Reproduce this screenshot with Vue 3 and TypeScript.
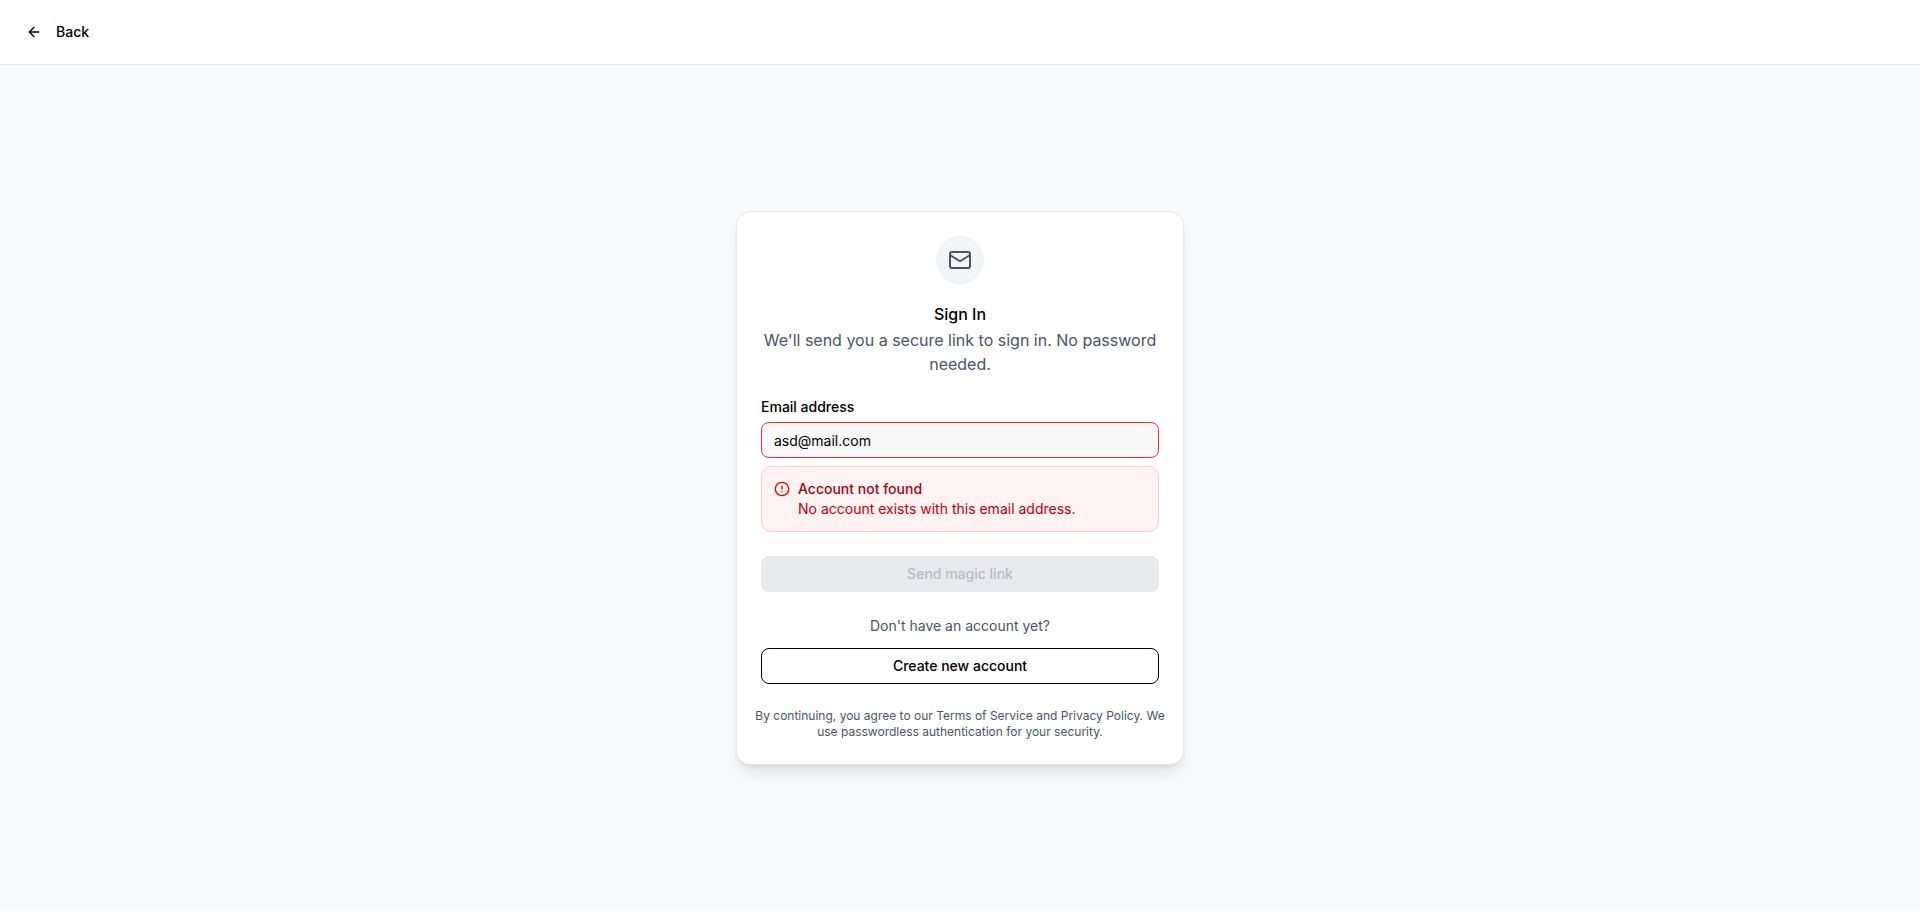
<script setup lang="ts">
import { ref } from 'vue'

const email = ref('asd@mail.com')
const error = ref({
  title: 'Account not found',
  message: 'No account exists with this email address.',
})
</script>

<template>
  <div class="page">
    <header class="topbar">
      <button class="back" type="button">
        <svg class="icon" viewBox="0 0 24 24" aria-hidden="true">
          <path d="m12 19-7-7 7-7" />
          <path d="M19 12H5" />
        </svg>
        Back
      </button>
    </header>

    <main class="content">
      <section class="card">
        <div class="intro">
          <div class="badge">
            <svg class="icon icon-large" viewBox="0 0 24 24" aria-hidden="true">
              <path d="m22 7-8.991 5.727a2 2 0 0 1-2.009 0L2 7" />
              <rect x="2" y="4" width="20" height="16" rx="2" />
            </svg>
          </div>
          <h1 class="title">Sign In</h1>
          <p class="description">We'll send you a secure link to sign in. No password needed.</p>
        </div>

        <form class="form" @submit.prevent>
          <div class="field">
            <label class="label" for="email">Email address</label>
            <input
              id="email"
              v-model="email"
              class="input"
              type="email"
              aria-invalid="true"
              aria-describedby="email-error"
            />
            <div id="email-error" class="alert" role="alert">
              <svg class="icon alert-icon" viewBox="0 0 24 24" aria-hidden="true">
                <circle cx="12" cy="12" r="10" />
                <path d="M12 8v4" />
                <path d="M12 16h.01" />
              </svg>
              <div>
                <p class="alert-title">{{ error.title }}</p>
                <p class="alert-message">{{ error.message }}</p>
              </div>
            </div>
          </div>
          <button class="button primary" type="submit" disabled>Send magic link</button>
        </form>

        <div class="signup">
          <p class="question">Don't have an account yet?</p>
          <button class="button outline" type="button">Create new account</button>
        </div>

        <p class="terms">
          By continuing, you agree to our Terms of Service and Privacy Policy. We use passwordless
          authentication for your security.
        </p>
      </section>
    </main>
  </div>
</template>

<style>
body {
  margin: 0;
}
</style>

<style scoped>
.page {
  display: flex;
  flex-direction: column;
  min-height: 100vh;
  background: #f9fafb;
  color: #000;
  font-family: Inter, "Liberation Sans", sans-serif;
  font-size: 14px;
  line-height: 20px;
}

.page * {
  box-sizing: border-box;
}

h1,
p {
  margin: 0;
}

.icon {
  flex-shrink: 0;
  width: 16px;
  height: 16px;
  fill: none;
  stroke: currentColor;
  stroke-width: 2;
  stroke-linecap: round;
  stroke-linejoin: round;
}

.topbar {
  display: flex;
  align-items: center;
  padding: 16px;
  background: #fff;
  border-bottom: 1px solid #e5e7eb;
}

.back {
  display: flex;
  align-items: center;
  gap: 14px;
  height: 32px;
  padding: 0 10px;
  border: 0;
  border-radius: 6px;
  background: none;
  color: inherit;
  font: inherit;
  font-weight: 500;
}

.content {
  display: flex;
  flex: 1;
  align-items: center;
  justify-content: center;
  padding: 16px;
}

.card {
  display: flex;
  flex-direction: column;
  gap: 24px;
  width: 100%;
  max-width: 448px;
  padding: 24px;
  border: 1px solid #e5e5e5;
  border-radius: 14px;
  background: #fff;
  box-shadow: 0 10px 15px -3px rgb(0 0 0 / 10%), 0 4px 6px -4px rgb(0 0 0 / 10%);
}

.intro {
  display: flex;
  flex-direction: column;
  align-items: center;
  gap: 6px;
  text-align: center;
}

.badge {
  display: flex;
  align-items: center;
  justify-content: center;
  width: 48px;
  height: 48px;
  margin-bottom: 16px;
  border-radius: 50%;
  background: #f3f4f6;
  color: #4a5565;
}

.icon-large {
  width: 24px;
  height: 24px;
}

.title {
  font-size: 16px;
  font-weight: 500;
  line-height: 16px;
}

.description {
  color: #4a5565;
  font-size: 16px;
  line-height: 24px;
}

.form {
  display: flex;
  flex-direction: column;
  gap: 24px;
}

.field {
  display: flex;
  flex-direction: column;
  gap: 8px;
}

.label {
  font-weight: 500;
  line-height: 14px;
}

.input {
  width: 100%;
  height: 36px;
  padding: 4px 12px;
  border: 1px solid #fb2c36;
  border-radius: 8px;
  outline: none;
  background: #f8f8f8;
  color: inherit;
  font: inherit;
}

.alert {
  display: flex;
  align-items: flex-start;
  gap: 8px;
  padding: 12px;
  border: 1px solid #ffc9c9;
  border-radius: 10px;
  background: #fef2f2;
}

.alert-icon {
  margin-top: 2px;
  color: #e7000b;
}

.alert-title {
  color: #9f0712;
  font-weight: 500;
}

.alert-message {
  color: #c10007;
}

.button {
  width: 100%;
  height: 36px;
  padding: 0 16px;
  border: 0;
  border-radius: 8px;
  font: inherit;
  font-weight: 500;
}

.primary {
  background: #e8e9ed;
  color: #b8bcc3;
}

.outline {
  border: 1px solid #000;
  background: #fff;
  color: #000;
}

.signup {
  display: flex;
  flex-direction: column;
  gap: 12px;
}

.question {
  color: #4a5565;
  text-align: center;
}

.terms {
  margin: 0 -8px;
  color: #4a5565;
  font-size: 12px;
  line-height: 16px;
  text-align: center;
}
</style>
